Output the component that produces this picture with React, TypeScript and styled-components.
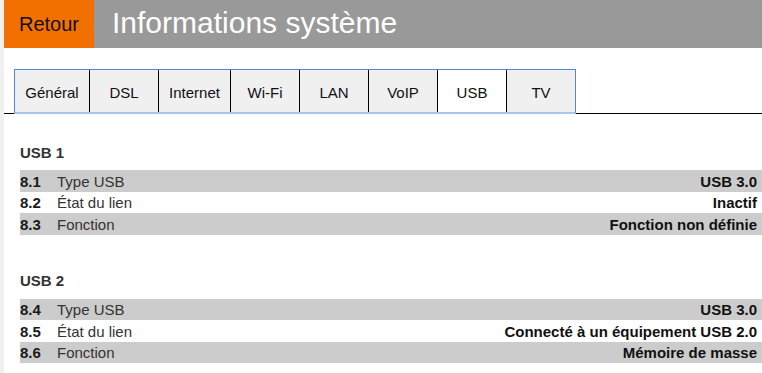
import React from "react";
import styled, { createGlobalStyle } from "styled-components";

const Global = createGlobalStyle`
  html, body { margin: 0; padding: 0; background: #f0f0f0; }
  body { font-family: "Liberation Sans", Arial, sans-serif; }
`;

const Page = styled.div`
  margin-left: 4px;
  background: #ffffff;
  min-height: 373px;
`;

const Header = styled.header`
  display: flex;
  height: 48px;
`;

const BackButton = styled.div`
  width: 90px;
  background: #f27000;
  color: #111;
  font-size: 20px;
  display: flex;
  align-items: center;
  justify-content: center;
  padding-top: 1px;
`;

const Title = styled.h1`
  flex: 1;
  margin: 0;
  background: #999999;
  color: #ffffff;
  font-weight: normal;
  font-size: 30px;
  display: flex;
  align-items: center;
  padding-left: 18px;
  padding-bottom: 3px;
`;

const TabBar = styled.nav`
  margin-top: 21px;
  display: flex;
  border-bottom: 1px solid #000;
  padding-left: 10px;
`;

const TabGroup = styled.div`
  display: flex;
  border: 1px solid #5b84d6;
  border-bottom: 2px solid #a9c5f2;
  margin-bottom: -1px;
`;

const Tab = styled.div<{ $active?: boolean; $w: number }>`
  width: ${(p) => p.$w}px;
  height: 42px;
  display: flex;
  align-items: center;
  justify-content: center;
  font-size: 15px;
  color: #111;
  background: ${(p) => (p.$active ? "#ffffff" : "#f0f0f0")};
  box-sizing: border-box;
  & + & { border-left: 1px solid #000; }
  padding-top: 2px;
`;

const Section = styled.section`
  padding: 0 0 0 16px;
`;

const SectionTitle = styled.h2`
  margin: 0;
  font-size: 15px;
  font-weight: bold;
  color: #333;
  height: 20px;
  display: flex;
  align-items: center;
`;

const Rows = styled.div`
  display: flex;
  flex-direction: column;
`;

const Row = styled.div<{ $shaded?: boolean }>`
  display: flex;
  align-items: center;
  height: 21.5px;
  background: ${(p) => (p.$shaded ? "#cccccc" : "transparent")};
  font-size: 15px;
  padding-right: 5px;
  padding-top: 1px;
  box-sizing: border-box;
`;

const Num = styled.span`
  width: 37px;
  font-weight: bold;
  color: #1a1a1a;
`;

const Label = styled.span`
  flex: 1;
  color: #333;
`;

const Value = styled.span`
  font-weight: bold;
  color: #111;
`;

const SectionSpacer = styled.div<{ $h: number }>`
  height: ${(p) => p.$h}px;
`;

const tabs: [string, number][] = [
  ["Général", 74],
  ["DSL", 69],
  ["Internet", 72],
  ["Wi-Fi", 69],
  ["LAN", 69],
  ["VoIP", 69],
  ["USB", 69],
  ["TV", 69],
];

const sections = [
  {
    title: "USB 1",
    rows: [
      ["8.1", "Type USB", "USB 3.0"],
      ["8.2", "État du lien", "Inactif"],
      ["8.3", "Fonction", "Fonction non définie"],
    ],
  },
  {
    title: "USB 2",
    rows: [
      ["8.4", "Type USB", "USB 3.0"],
      ["8.5", "État du lien", "Connecté à un équipement USB 2.0"],
      ["8.6", "Fonction", "Mémoire de masse"],
    ],
  },
];

export default function App() {
  return (
    <>
      <Global />
      <Page>
        <Header>
          <BackButton>Retour</BackButton>
          <Title>Informations système</Title>
        </Header>
        <TabBar>
          <TabGroup>
            {tabs.map(([t, w]) => (
              <Tab key={t} $w={w} $active={t === "USB"}>
                {t}
              </Tab>
            ))}
          </TabGroup>
        </TabBar>
        {sections.map((s, i) => (
          <Section key={s.title}>
            <SectionSpacer $h={i === 0 ? 28 : 36} />
            <SectionTitle>{s.title}</SectionTitle>
            <SectionSpacer $h={8} />
            <Rows>
              {s.rows.map(([n, l, v], j) => (
                <Row key={n} $shaded={j !== 1}>
                  <Num>{n}</Num>
                  <Label>{l}</Label>
                  <Value>{v}</Value>
                </Row>
              ))}
            </Rows>
          </Section>
        ))}
      </Page>
    </>
  );
}
